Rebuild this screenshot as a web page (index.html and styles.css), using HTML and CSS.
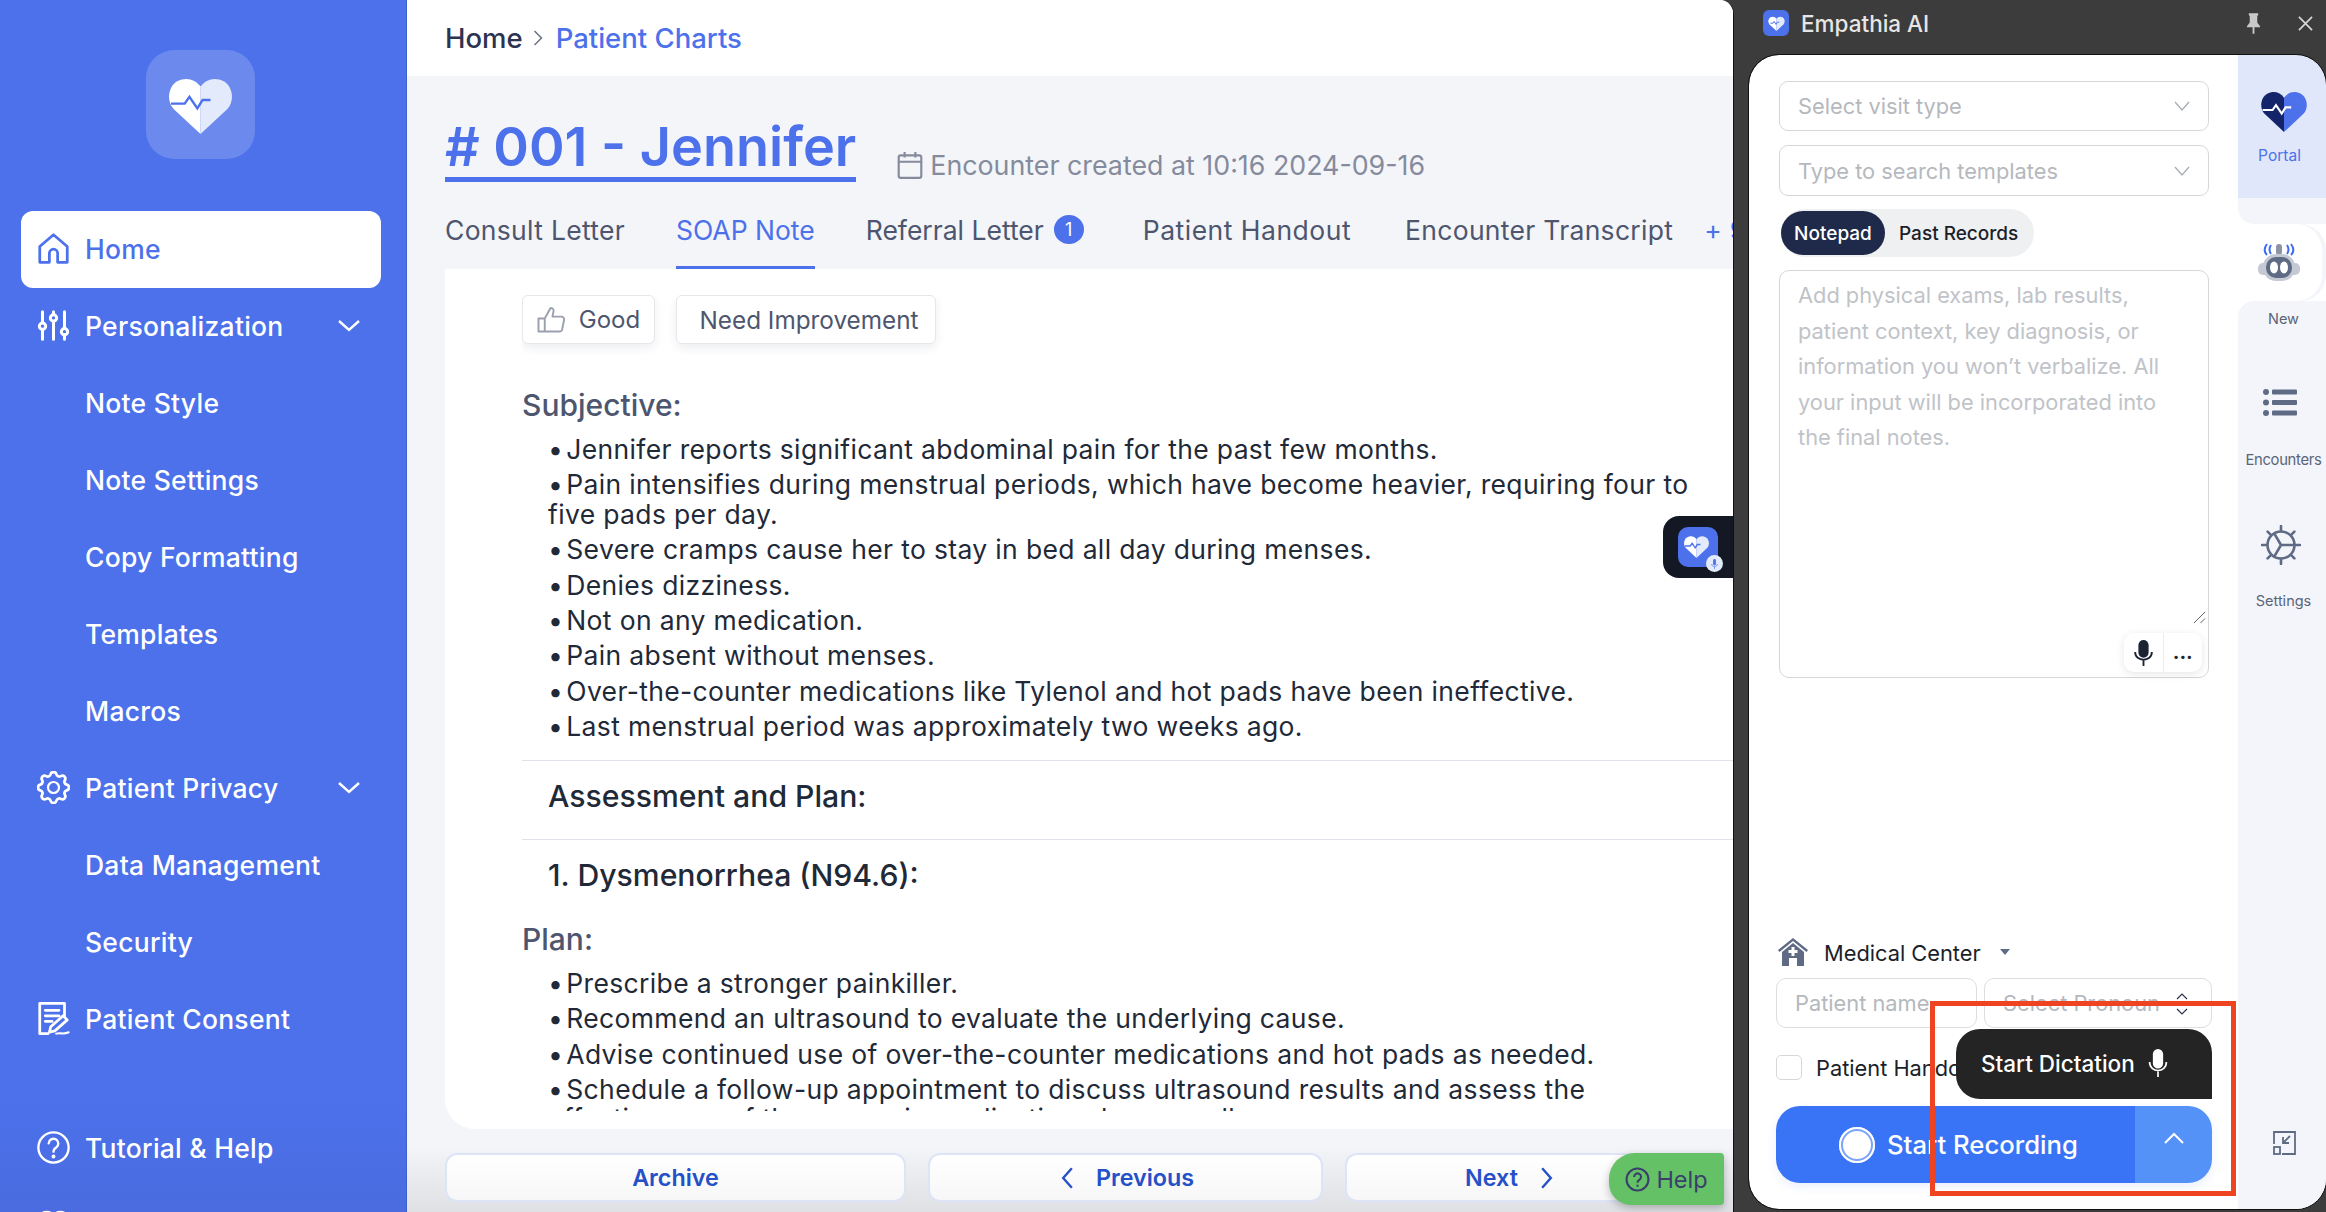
FILE: index.html
```html
<!DOCTYPE html>
<html lang="en">
<head>
<meta charset="utf-8">
<title>Empathia AI</title>
<link rel="stylesheet" href="styles.css">
</head>
<body>
<div class="app">
  <aside class="sidebar">
    <div class="logo">
      <svg class="logo-heart" viewBox="0 0 24 22"><path fill="#fff" d="M12 22 1.800 12.500C-1 9.500-.3 4 3.200 2 6.500.2 10 1.200 12 4Z"/><path fill="#e3eafb" d="M12 22l10.200-9.500c2.800-3 2.100-8.500-1.400-10.500C17.500.2 14 1.200 12 4Z"/><path fill="none" stroke="#4c71eb" stroke-width=".9" d="M.8 10.500H6l1.800-2.600 3 4.400 2-3.200h3"/></svg>
    </div>
    <nav class="nav">
      <a class="nav-item active"><svg class="nav-icon" viewBox="0 0 24 24" fill="none" stroke="#4c71eb" stroke-width="2" stroke-linejoin="round"><path d="M2 10.500 12 2l10 8.500V22H15v-6.500a3 3 0 0 0-6 0V22H2Z"/></svg>Home</a>
      <a class="nav-item"><svg class="nav-icon" viewBox="0 0 24 24" fill="none" stroke="#fff" stroke-width="2.200" stroke-linecap="round"><path d="M4 2v8M4 15v7M12 2v2M12 9v13M20 2v12M20 19v3"/><circle cx="4" cy="12.500" r="2.300"/><circle cx="12" cy="6.500" r="2.300"/><circle cx="20" cy="16.500" r="2.300"/></svg>Personalization<svg class="nav-chevron" viewBox="0 0 22 12" fill="none" stroke="#fff" stroke-width="2.400"><path d="M1 1l10 9 10-9"/></svg></a>
      <a class="nav-item sub">Note Style</a>
      <a class="nav-item sub">Note Settings</a>
      <a class="nav-item sub">Copy Formatting</a>
      <a class="nav-item sub">Templates</a>
      <a class="nav-item sub">Macros</a>
      <a class="nav-item"><svg class="nav-icon" viewBox="0 0 24 24" fill="none" stroke="#fff" stroke-width="1.600"><path d="M10.325 4.317c.426-1.756 2.924-1.756 3.350 0a1.724 1.724 0 0 0 2.573 1.066c1.543-.94 3.310.826 2.370 2.370a1.724 1.724 0 0 0 1.065 2.572c1.756.426 1.756 2.924 0 3.350a1.724 1.724 0 0 0-1.066 2.573c.94 1.543-.826 3.310-2.370 2.370a1.724 1.724 0 0 0-2.572 1.065c-.426 1.756-2.924 1.756-3.350 0a1.724 1.724 0 0 0-2.573-1.066c-1.543.94-3.310-.826-2.370-2.370a1.724 1.724 0 0 0-1.065-2.572c-1.756-.426-1.756-2.924 0-3.350a1.724 1.724 0 0 0 1.066-2.573c-.94-1.543.826-3.310 2.370-2.370 1 .608 2.296.07 2.572-1.065z" transform="translate(-3 -3) scale(1.250)"/><circle cx="12" cy="12" r="4"/></svg>Patient Privacy<svg class="nav-chevron" viewBox="0 0 22 12" fill="none" stroke="#fff" stroke-width="2.400"><path d="M1 1l10 9 10-9"/></svg></a>
      <a class="nav-item sub">Data Management</a>
      <a class="nav-item sub">Security</a>
      <a class="nav-item"><svg class="nav-icon" viewBox="0 0 24 24" fill="none" stroke="#fff" stroke-width="2" stroke-linecap="round" stroke-linejoin="round"><path d="M8 23H2V1h18v10M6 6h10M6 10h10M6 14h5"/><path d="M9 22l1-4 9-8 3 3-9 8Z"/><path d="M14 23c3-1 5 1 9-1" stroke-width="1.500"/></svg>Patient Consent</a>
      <a class="nav-item help-item"><svg class="nav-icon" viewBox="0 0 24 24" fill="none" stroke="#fff" stroke-width="1.700" stroke-linecap="round"><circle cx="12" cy="12" r="11"/><path d="M8.500 9a3.500 3.500 0 1 1 5.500 3c-1.300.8-2 1.500-2 3"/><circle cx="12" cy="18.500" r=".6" fill="#fff"/></svg>Tutorial &amp; Help</a>
      <a class="nav-item"><svg class="nav-icon" viewBox="0 0 24 24" fill="none" stroke="#fff" stroke-width="2"><path d="M12 22 3 13C0 9 2 3 7 3c2 0 4 1 5 3 1-2 3-3 5-3 5 0 7 6 4 10Z"/></svg></a>
    </nav>
  </aside>

  <main class="main">
    <header class="topbar"><span class="crumb-home">Home</span><svg class="crumb-sep" viewBox="0 0 10 18" fill="none" stroke="#6b7280" stroke-width="1.500"><path d="M1.500 2l7 7-7 7"/></svg><span class="crumb-current">Patient Charts</span></header>
    <section class="title-row">
      <h1 class="title">#&nbsp;001 - Jennifer</h1>
      <div class="created"><svg class="cal" viewBox="0 0 24 26" fill="none" stroke="#858b9c" stroke-width="2"><rect x="1.500" y="4" width="21" height="21" rx="2"/><path d="M1.500 10h21M7 1v5M17 1v5"/></svg>Encounter created at 10:16 2024-09-16</div>
    </section>
    <div class="tabs">
      <span class="tab">Consult Letter</span>
      <span class="tab on">SOAP Note</span>
      <span class="tab tight">Referral Letter<i class="badge">1</i></span>
      <span class="tab loose">Patient Handout</span>
      <span class="tab">Encounter Transcript</span>
      <span class="tab more">+ 9</span>
    </div>
    <section class="card">
      <div class="note">
        <div class="feedback">
          <button class="fb"><svg class="thumb" viewBox="0 0 30 28" fill="none" stroke="#9aa0ad" stroke-width="2" stroke-linejoin="round"><path d="M1.500 13H8v13.500H1.500ZM8 13l6-11c3 0 3.500 2 3 4l-1 5h9c2 0 3.500 1.500 3 3.500l-2 10c-.3 1.300-1.500 2-3 2H8"/></svg>Good</button>
          <button class="fb wide">Need Improvement</button>
        </div>
        <h3 class="section">Subjective:</h3>
        <ul class="list">
          <li>Jennifer reports significant abdominal pain for the past few months.</li>
          <li>Pain intensifies during menstrual periods, which have become heavier, requiring four to five pads per day.</li>
          <li>Severe cramps cause her to stay in bed all day during menses.</li>
          <li>Denies dizziness.</li>
          <li>Not on any medication.</li>
          <li>Pain absent without menses.</li>
          <li>Over-the-counter medications like Tylenol and hot pads have been ineffective.</li>
          <li>Last menstrual period was approximately two weeks ago.</li>
        </ul>
        <h2 class="rule-head">Assessment and Plan:</h2>
        <h2 class="rule-head second">1. Dysmenorrhea (N94.6):</h2>
        <h3 class="section plan">Plan:</h3>
        <ul class="list">
          <li>Prescribe a stronger painkiller.</li>
          <li>Recommend an ultrasound to evaluate the underlying cause.</li>
          <li>Advise continued use of over-the-counter medications and hot pads as needed.</li>
          <li>Schedule a follow-up appointment to discuss ultrasound results and assess the effectiveness of the new pain medication plan as well.</li>
        </ul>
      </div>
    </section>
    <footer class="actions">
      <button class="act archive">Archive</button>
      <button class="act prev"><svg class="act-ch" viewBox="0 0 12 22" fill="none" stroke="#2550c8" stroke-width="2.200"><path d="M10 2 2 11l8 9"/></svg>Previous</button>
      <button class="act next">Next<svg class="act-ch" viewBox="0 0 12 22" fill="none" stroke="#2550c8" stroke-width="2.200"><path d="M2 2l8 9-8 9"/></svg></button>
    </footer>
    <button class="help"><svg class="help-ic" viewBox="0 0 24 24" fill="none" stroke="#3a3f6b" stroke-width="2"><circle cx="12" cy="12" r="10.500"/><path d="M8.800 9.500a3.300 3.300 0 1 1 5 2.800c-1.200.7-1.800 1.300-1.800 2.700M12 17v2"/></svg>Help</button>
    <div class="widget">
      <div class="widget-ic">
        <svg class="widget-heart" viewBox="0 0 24 22"><path fill="#fff" d="M12 22 1.800 12.500C-1 9.500-.3 4 3.200 2 6.500.2 10 1.200 12 4Z"/><path fill="#e3eafb" d="M12 22l10.200-9.500c2.800-3 2.100-8.500-1.400-10.500C17.500.2 14 1.200 12 4Z"/><path fill="none" stroke="#4c71eb" stroke-width="1.300" d="M.8 10.500H6l1.800-2.600 3 4.400 2-3.200h3"/></svg>
        <span class="widget-badge"><svg viewBox="0 0 10 14" class="widget-mic"><rect x="3" y="0" width="4" height="9" rx="2" fill="#4c71eb"/><path d="M1 7c0 5 8 5 8 0M5 11v3" stroke="#4c71eb" fill="none"/></svg></span>
      </div>
    </div>
  </main>

  <section class="panel">
    <div class="titlebar">
      <span class="tb-logo"><svg viewBox="0 0 24 22" class="tb-heart"><path fill="#fff" d="M12 22 1.800 12.500C-1 9.500-.3 4 3.200 2 6.500.2 10 1.200 12 4Z"/><path fill="#e3eafb" d="M12 22l10.200-9.500c2.800-3 2.100-8.500-1.400-10.500C17.500.2 14 1.200 12 4Z"/><path fill="none" stroke="#4c71eb" stroke-width="1.400" d="M3 10.500H7l1.600-2.600 2.600 4.400 1.800-3.200H16"/></svg></span>
      <span class="tb-name">Empathia AI</span>
      <svg class="tb-pin" viewBox="0 0 16 22"><path fill="#c9c9c9" d="M3 0h10v2l-1 1v7l3 4v1H1v-1l3-4V3L3 2ZM7 15h2v7H7Z"/></svg>
      <svg class="tb-close" viewBox="0 0 16 16" fill="none" stroke="#d8d8d8" stroke-width="1.800"><path d="M1 1l14 14M15 1 1 15"/></svg>
    </div>
    <div class="panel-body">
      <div class="form">
        <div class="select"><span>Select visit type</span><svg class="sel-ch" viewBox="0 0 16 10" fill="none" stroke="#a8acb3" stroke-width="1.300"><path d="M1 1l7 8 7-8"/></svg></div>
        <div class="select second"><span>Type to search templates</span><svg class="sel-ch" viewBox="0 0 16 10" fill="none" stroke="#a8acb3" stroke-width="1.300"><path d="M1 1l7 8 7-8"/></svg></div>
        <div class="toggle"><span class="tg on">Notepad</span><span class="tg">Past Records</span></div>
        <div class="notepad">
          <p class="placeholder">Add physical exams, lab results, patient context, key diagnosis, or information you won’t verbalize. All your input will be incorporated into the final notes.</p>
          <svg class="resize" viewBox="0 0 14 14" fill="none" stroke="#555" stroke-width="1"><path d="M1 13 13 1M8 13l5-5"/></svg>
          <div class="pad-tools">
            <span class="pad-tool"><svg class="pad-mic" viewBox="0 0 20 28"><rect x="4.500" y="0" width="11" height="19" rx="5.500" fill="#1c2333"/><path d="M1 13c0 11 18 11 18 0M10 22v6" fill="none" stroke="#1c2333" stroke-width="2"/></svg></span>
            <span class="pad-tool dots">...</span>
          </div>
        </div>
        <div class="lower">
          <div class="center-row">
            <svg class="hosp" viewBox="0 0 30 28"><path fill="#5f6b85" d="M15 0 0 12l1.500 2L15 3l13.500 11 1.500-2Z"/><path fill="#5f6b85" d="M4 14 15 5l11 9v14h-7v-8h-8v8H4Z"/><path fill="#fff" d="M13.500 9h3v3h3v3h-3v3h-3v-3h-3v-3h3Z"/></svg>
            <span class="center-name">Medical Center</span>
            <svg class="caret" viewBox="0 0 10 6"><path fill="#5f6b85" d="M0 0h10L5 6Z"/></svg>
          </div>
          <div class="inputs">
            <div class="field name">Patient name</div>
            <div class="field pron">Select Pronoun<svg class="updown" viewBox="0 0 12 24" fill="none" stroke="#2b3350" stroke-width="1.200"><path d="M1 7l5-5 5 5M1 17l5 5 5-5"/></svg></div>
          </div>
          <label class="check-row"><span class="check"></span>Patient Handout</label>
          <div class="record">
            <button class="rec-main"><span class="rec-dot"></span>Start Recording</button>
            <button class="rec-more"><svg class="rec-ch" viewBox="0 0 20 12" fill="none" stroke="#fff" stroke-width="2"><path d="M1 11l9-9 9 9"/></svg></button>
          </div>
          <div class="tooltip">Start Dictation<svg class="tip-mic" viewBox="0 0 20 30"><rect x="4.500" y="0" width="11" height="21" rx="5.500" fill="#fff"/><path d="M1 14c0 12 18 12 18 0M10 24v6" fill="none" stroke="#fff" stroke-width="1.800"/></svg></div>
        </div>
      </div>
      <div class="rail">
        <div class="rail-item portal">
          <svg class="portal-heart" viewBox="0 0 24 22"><path fill="#14246b" d="M12 22 1.800 12.500C-1 9.500-.3 4 3.200 2 6.500.2 10 1.200 12 4Z"/><path fill="#4c71eb" d="M12 22l10.200-9.500c2.800-3 2.100-8.500-1.400-10.500C17.500.2 14 1.200 12 4Z"/><path fill="none" stroke="#fff" stroke-width="1.100" d="M.8 10.500H6l1.800-2.600 3 4.400 2-3.200h3"/></svg>
          <span>Portal</span>
        </div>
        <div class="rail-gap"></div>
        <div class="rail-new">
          <svg class="robot" viewBox="0 0 42 38"><path fill="none" stroke="#3f6cf0" stroke-width="2" d="M13 2c-2 3-2 6 0 9M9 1c-3 4-3 8 0 11M29 2c2 3 2 6 0 9M33 1c3 4 3 8 0 11"/><rect x="18" y="1" width="6" height="11" rx="3" fill="#8c93a5"/><rect x="0" y="20" width="42" height="12" rx="5" fill="#c4c9d4"/><rect x="5" y="11" width="32" height="27" rx="13" fill="#c4c9d4"/><rect x="8" y="14" width="26" height="21" rx="10" fill="#5f6b85"/><ellipse cx="16" cy="24.500" rx="4" ry="6" fill="#fff"/><ellipse cx="26" cy="24.500" rx="4" ry="6" fill="#fff"/></svg>
        </div>
        <div class="rail-rest">
          <span class="new-label">New</span>
          <div class="rail-item enc">
            <svg class="list-ic" viewBox="0 0 34 27" fill="#5f6b85"><circle cx="3" cy="3" r="3"/><circle cx="3" cy="13.500" r="3"/><circle cx="3" cy="24" r="3"/><rect x="9" y=".5" width="25" height="5" rx="1"/><rect x="9" y="11" width="25" height="5" rx="1"/><rect x="9" y="21.500" width="25" height="5" rx="1"/></svg>
            <span>Encounters</span>
          </div>
          <div class="rail-item set">
            <svg class="gear-ic" viewBox="0 0 40 40" fill="none" stroke="#5f6b85" stroke-width="2.600"><circle cx="20" cy="20" r="13.500"/><path d="M20 20h13.500M20 20 13.200 8.300M20 20l-6.800 11.700"/><path stroke-linecap="round" d="M20 1v5M20 34v5M1 20h5M34 20h5M6.600 6.600l3.500 3.500M29.900 29.900l3.500 3.500M6.600 33.400l3.500-3.500M29.900 10.100l3.500-3.500"/></svg>
            <span>Settings</span>
          </div>
          <svg class="shrink" viewBox="0 0 24 24" fill="none" stroke="#5f6b85" stroke-width="1.800"><path d="M2 13V1h21v22H10"/><rect x="2" y="16" width="6" height="7"/><path d="M18 5l-7 7M11 6v6h6"/></svg>
        </div>
      </div>
    </div>
  </section>
</div>
<div class="annotation"></div>
</body>
</html>
```

FILE: styles.css
```css
* { box-sizing: border-box; }
html, body { margin: 0; height: 1212px; overflow: hidden; }
body { font-family: Inter, "Liberation Sans", sans-serif; background: #3c3c3c; }
h1, h2, h3, p, ul { margin: 0; padding: 0; }
button { font-family: inherit; cursor: pointer; }
.app { display: flex; height: 1212px; }

/* Sidebar */
.sidebar { width: 407px; flex: none; height: 1212px; overflow: hidden; background: linear-gradient(#4c71eb 90%, #4a6ce0); border-right: 1px solid #3e5fd0; padding-top: 50px; }
.logo { width: 109px; height: 109px; margin-left: 146px; border-radius: 28px; background: #6c89ee; display: flex; align-items: center; justify-content: center; }
.logo-heart { width: 65px; height: 58px; }
.nav { margin: 52px 25px 0 21px; }
.nav-item { display: flex; align-items: center; height: 77px; padding: 0 0 2px 16px; color: #fff; font-size: 26.500px; font-weight: 500; letter-spacing: .25px; white-space: nowrap; }
.nav-item.active { background: #fff; color: #4c71eb; border-radius: 12px; }
.nav-item.sub { padding-left: 64px; }
.nav-icon { width: 33px; height: 33px; margin-right: 15px; flex: none; }
.nav-chevron { width: 22px; height: 12px; margin-left: auto; margin-right: 21px; }
.help-item { margin-top: 52px; }

/* Main */
.main { position: relative; width: 1327px; flex: none; height: 1212px; background: #f3f5f9; border-top-right-radius: 14px; overflow: hidden; display: flex; flex-direction: column; border-right: 1px solid #111; }
.topbar { height: 76px; flex: none; background: #fff; padding: 0 0 1px 38px; display: flex; align-items: center; font-size: 27.500px; font-weight: 500; }
.crumb-home { color: #2b3350; }
.crumb-sep { width: 10px; height: 18px; margin: 0 13px 0 10px; }
.crumb-current { color: #4c71eb; }
.title-row { height: 106px; flex: none; padding-left: 38px; display: flex; align-items: flex-end; }
.title { color: #4c71eb; font-size: 54px; font-weight: 600; line-height: 79px; border-bottom: 5px solid #4c71eb; height: 75px; white-space: nowrap; }
.created { display: flex; align-items: center; color: #858b9c; font-size: 26.800px; margin: 0 0 1px 41px; height: 32px; white-space: nowrap; }
.cal { width: 26px; height: 28px; margin-right: 7px; }
.tabs { height: 87px; flex: none; padding-left: 38px; display: flex; align-items: flex-end; gap: 51px; white-space: nowrap; }
.tab { height: 63px; display: flex; align-items: flex-start; color: #4d566e; font-size: 26.500px; letter-spacing: .3px; line-height: 34px; padding-top: 7px; border-bottom: 2px solid transparent; }
.tab.on { color: #4c71eb; border-bottom: 3px solid #4c71eb; letter-spacing: 0; }
.tab.tight { letter-spacing: 0; }
.tab.loose { letter-spacing: .5px; margin-right: 3px; }
.tab.more { color: #4c71eb; margin-left: -20px; }
.badge { width: 30px; height: 29px; margin: 2px 8px 0 10px; border-radius: 50%; background: #4c71eb; color: #fff; font-style: normal; font-size: 18px; line-height: 29px; text-align: center; }
.card { margin-left: 38px; height: 860px; flex: none; background: #fff; border-bottom-left-radius: 30px; padding: 26px 0 18px 77px; }
.note { height: 816px; overflow: hidden; }
.feedback { display: flex; gap: 21px; }
.fb { height: 49px; width: 133px; background: #fff; border: 1px solid #e5e7eb; border-radius: 6px; box-shadow: 0 4px 10px rgba(30,40,80,.08); color: #4d566e; font-size: 24px; display: flex; align-items: center; justify-content: center; gap: 13px; padding: 0; }
.fb.wide { width: 260px; font-size: 24.300px; padding-left: 6px; }
.thumb { width: 29px; height: 27px; }
.section { color: #4d566e; font-size: 30px; font-weight: 500; line-height: 40px; margin-top: 41px; }
.list { list-style: none; padding-left: 26px; padding-right: 30px; margin-top: 10px; color: #1f2937; font-size: 26.500px; letter-spacing: .35px; line-height: 29.500px; }
.list li { margin-bottom: 5.900px; }
.list li::before { content: "•"; margin-right: 3px; }
.rule-head { border-top: 1px solid #dfe2e8; padding: 15px 0 23px 26px; font-size: 30.200px; font-weight: 500; line-height: 40px; color: #1f2937; margin-top: 18px; }
.rule-head.second { margin-top: 0; padding-bottom: 0; }
.section.plan { margin-top: 24px; }

/* Bottom actions */
.actions { flex: 1; display: flex; padding: 24px 0 0 38px; gap: 22px; background: linear-gradient(#f3f5f9 20%, #dfe0e4); }
.act { height: 49px; background: linear-gradient(#fff, #f7f7f8); border: 2px solid #dde4f6; border-radius: 12px; color: #2550c8; font-size: 23.300px; font-weight: 600; display: flex; align-items: center; justify-content: center; gap: 22px; padding: 0; }
.archive { width: 461px; }
.prev { width: 395px; padding-left: 4px; }
.next { width: 342px; padding-right: 14px; }
.act-ch { width: 13px; height: 24px; }
.help { position: absolute; left: 1202px; top: 1153px; width: 115px; height: 52px; background: #64c166; border: 0; border-radius: 26px 4px 4px 22px; box-shadow: 0 3px 8px rgba(0,0,0,.25); color: #3a3f6b; font-size: 23.500px; display: flex; align-items: center; justify-content: center; gap: 6px; padding: 0; }
.help-ic { width: 25px; height: 25px; }
.widget { position: absolute; left: 1256px; top: 516px; width: 71px; height: 62px; background: #141824; border-radius: 16px 0 0 16px; padding: 11px 0 0 15px; }
.widget-ic { position: relative; width: 40px; height: 40px; background: #4c71eb; border-radius: 10px; display: flex; align-items: center; justify-content: center; }
.widget-heart { width: 25px; height: 23px; margin: -2px 0 0 -4px; }
.widget-badge { position: absolute; right: -5px; bottom: -5px; width: 17px; height: 17px; border-radius: 50%; background: #e3eafb; display: flex; align-items: center; justify-content: center; }
.widget-mic { width: 7px; height: 10px; }

/* Panel */
.panel { flex: 1; min-width: 0; height: 1212px; display: flex; flex-direction: column; background: #3c3c3c; }
.titlebar { height: 55px; flex: none; display: flex; align-items: center; padding: 0 0 9px 29px; color: #e6e6e6; font-size: 22.500px; font-weight: 500; }
.tb-logo { width: 26px; height: 26px; background: #4c71eb; border-radius: 6px; display: flex; align-items: center; justify-content: center; }
.tb-heart { width: 17px; height: 15px; }
.tb-name { margin-left: 12px; }
.tb-pin { width: 15px; height: 21px; margin-left: auto; margin-right: 37px; }
.tb-close { width: 15px; height: 15px; margin-right: 13px; }
.panel-body { margin: 0 0 3px 15px; flex: 1; display: flex; background: #fff; border-radius: 30px; overflow: hidden; outline: 1px solid #111; }
.form { position: relative; width: 489px; flex: none; display: flex; flex-direction: column; padding: 26px 0 26px 30px; }
.select { width: 430px; height: 50px; flex: none; border: 1.500px solid #d5d7db; border-radius: 9px; display: flex; align-items: center; justify-content: space-between; padding: 0 18px 0 18px; color: #b5b8bd; font-size: 21.800px; }
.select.second { margin-top: 14px; height: 51px; }
.sel-ch { width: 16px; height: 10px; }
.toggle { margin: 13px 0 0 2px; flex: none; width: 253px; height: 48px; background: #eff0f2; border-radius: 24px; padding: 2px 0 0; display: flex; color: #1b1f2a; font-size: 19px; }
.tg { height: 44px; line-height: 45px; margin-left: 14px; font-weight: 500; }
.tg.on { margin-left: 0; width: 104px; text-align: center; background: #1f2a4a; color: #fff; border-radius: 22px; }
.notepad { position: relative; margin-top: 13px; width: 430px; height: 408px; flex: none; border: 1.500px solid #d5d7db; border-radius: 10px; padding: 7px 18px; }
.placeholder { color: #c0c3c8; font-size: 21.800px; line-height: 35.500px; }
.resize { position: absolute; right: 2px; bottom: 53px; width: 13px; height: 13px; }
.pad-tools { position: absolute; right: 6px; bottom: 5px; display: flex; width: 78px; height: 39px; border-radius: 10px; background: #fff; box-shadow: 0 2px 8px rgba(0,0,0,.1); }
.pad-tool { flex: 1; display: flex; align-items: center; justify-content: center; }
.pad-tool.dots { border-left: 1px solid #ececec; font-size: 20px; font-weight: 700; line-height: 1; color: #1c2333; padding-bottom: 2px; }
.pad-mic { width: 19px; height: 26px; }
.lower { margin: auto 0 0 -3px; }
.center-row { display: flex; align-items: center; height: 28px; padding-left: 2px; position: relative; }
.hosp { width: 30px; height: 28px; }
.center-name { margin-left: 16px; font-size: 21.800px; color: #1b1f2a; padding-top: 2px; }
.caret { width: 10px; height: 6px; margin-left: 19px; }
.inputs { display: flex; gap: 7px; margin-top: 12px; }
.field { height: 50px; border: 1.500px solid #dcdee2; border-radius: 10px; color: #b5b8bd; font-size: 21.800px; line-height: 48px; padding-left: 18px; white-space: nowrap; overflow: hidden; }
.field.name { width: 201px; }
.field.pron { width: 228px; position: relative; }
.updown { position: absolute; right: 23px; top: 13px; width: 12px; height: 24px; }
.check-row { display: flex; align-items: center; margin-top: 27px; height: 25px; font-size: 21.800px; color: #1b1f2a; white-space: nowrap; }
.check { width: 26px; height: 25px; border: 1.500px solid #d5d7db; border-radius: 5px; margin-right: 14px; }
.record { display: flex; width: 436px; height: 77px; margin-top: 26px; border-radius: 24px; overflow: hidden; box-shadow: 0 4px 10px rgba(60,110,240,.1); }
.rec-main { width: 359px; border: 0; background: #3a74f6; color: #fff; font-size: 25.700px; font-weight: 500; display: flex; align-items: center; padding: 0 0 0 63px; gap: 12px; }
.rec-dot { width: 36px; height: 36px; border-radius: 50%; background: #fff; box-shadow: inset 0 0 0 2px #fff, inset 0 0 0 4px #7aa3f9; }
.rec-more { flex: 1; border: 0; background: #5592f7; display: flex; justify-content: center; padding: 26px 0 0; }
.rec-ch { width: 20px; height: 12px; }
.tooltip { position: absolute; left: 207px; bottom: 110px; width: 256px; height: 70px; background: #242424; border-radius: 24px 24px 0 24px; color: #fff; font-size: 22.500px; font-weight: 500; display: flex; align-items: center; padding: 0 0 2px 25px; gap: 13px; }
.tip-mic { width: 20px; height: 28px; }

/* Rail */
.rail { flex: 1; display: flex; flex-direction: column; background: #fff; color: #5a6478; }
.rail-item { display: flex; flex-direction: column; align-items: center; }
.portal { height: 143px; background: #e0e7fb; color: #4c71eb; font-size: 15.500px; padding: 35px 5px 0 0; }
.portal-heart { width: 46px; height: 42px; margin-left: 8px; }
.portal span { margin-top: 14px; }
.rail-gap { height: 26px; flex: none; background: #f3f5fa; border-bottom-left-radius: 16px; }
.rail-new { height: 77px; flex: none; width: 84px; background: #fff; border-radius: 0 26px 26px 0; box-shadow: 4px 0 0 #f3f5fa; padding: 19px 0 0 20px; }
.robot { width: 42px; height: 38px; display: block; }
.rail-rest { flex: 1; position: relative; background: #f3f5fa; border-top-left-radius: 16px; display: flex; flex-direction: column; align-items: center; padding-left: 3px; }
.new-label { margin-top: 8px; font-size: 14.500px; line-height: 20px; }
.enc { margin-top: 60px; }
.list-ic { width: 34px; height: 27px; margin-right: 6px; }
.enc span { margin-top: 35px; font-size: 14.800px; letter-spacing: -.3px; line-height: 18px; }
.set { margin-top: 56px; }
.gear-ic { width: 40px; height: 40px; margin-right: 4px; }
.set span { margin-top: 27px; line-height: 18px; font-size: 14.500px; }
.shrink { position: absolute; left: 34px; top: 830px; width: 24px; height: 24px; }

.annotation { position: absolute; left: 1930px; top: 1001px; width: 306px; height: 195px; border: 5px solid #ee4422; pointer-events: none; }
```
